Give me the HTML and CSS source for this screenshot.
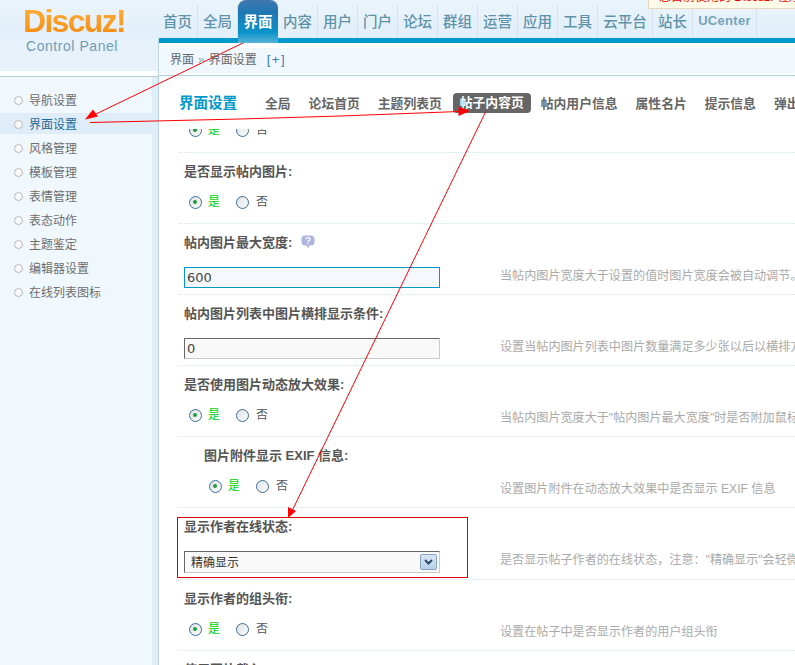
FILE: index.html
```html
<!DOCTYPE html>
<html lang="zh">
<head>
<meta charset="utf-8">
<title>界面设置</title>
<link rel="stylesheet" href="styles.css">
</head>
<body>
<div class="page">
  <header class="top">
    <div class="logo">
      <div class="logo-word">Discuz!</div>
      <div class="logo-sub">Control Panel</div>
    </div>
    <nav class="nav">
      <a>首页</a><a>全局</a><a class="on">界面</a><a>内容</a><a>用户</a><a>门户</a><a>论坛</a><a>群组</a><a>运营</a><a>应用</a><a>工具</a><a class="wide">云平台</a><a>站长</a><a class="uc">UCenter</a>
    </nav>
  </header>
  <div class="columns">
    <aside class="side">
      <div class="side-cap"></div>
      <ul class="menu">
        <li>导航设置</li>
        <li class="on">界面设置</li>
        <li>风格管理</li>
        <li>模板管理</li>
        <li>表情管理</li>
        <li>表态动作</li>
        <li>主题鉴定</li>
        <li>编辑器设置</li>
        <li>在线列表图标</li>
      </ul>
    </aside>
    <main class="main">
      <div class="crumbs"><span>界面</span><span class="sep">»</span><span>界面设置</span><span class="plus">[+]</span></div>
      <div class="tabs">
        <h1>界面设置</h1>
        <a>全局</a><a>论坛首页</a><a>主题列表页</a><a class="on">帖子内容页</a><a>帖内用户信息</a><a>属性名片</a><a>提示信息</a><a>弹出</a>
      </div>
      <div class="form">
        <div class="row first">
          <div class="cell"><div class="radios"><span class="radio sel"></span><b class="yes">是</b><span class="radio"></span><span class="no">否</span></div></div>
        </div>
        <div class="row">
          <div class="cell"><div class="label">是否显示帖内图片:</div><div class="radios"><span class="radio sel"></span><b class="yes">是</b><span class="radio"></span><span class="no">否</span></div></div>
        </div>
        <div class="row">
          <div class="cell"><div class="label">帖内图片最大宽度:<svg class="help" width="14" height="14" viewBox="0 0 14 14"><path d="M4 0.500h6a3.500 3.500 0 0 1 3.500 3.500v3a3.500 3.500 0 0 1-3.500 3.500h-1.500L7 13.500 5.500 10.500H4A3.500 3.500 0 0 1 .5 7V4A3.500 3.500 0 0 1 4 .5z" fill="#aeb4e0"/><path d="M5 4.200c.2-1 1-1.500 2-1.500 1.200 0 2 .7 2 1.600 0 1.300-2 1.300-2 2.700M7 8v1" fill="none" stroke="#fff" stroke-width="1.300"/></svg></div><div class="input focus">600</div></div>
          <div class="tip">当帖内图片宽度大于设置的值时图片宽度会被自动调节。</div>
        </div>
        <div class="row">
          <div class="cell"><div class="label">帖内图片列表中图片横排显示条件:</div><div class="input">0</div></div>
          <div class="tip">设置当帖内图片列表中图片数量满足多少张以后以横排方式显示</div>
        </div>
        <div class="row">
          <div class="cell"><div class="label">是否使用图片动态放大效果:</div><div class="radios"><span class="radio sel"></span><b class="yes">是</b><span class="radio"></span><span class="no">否</span></div></div>
          <div class="tip">当帖内图片宽度大于"帖内图片最大宽度"时是否附加鼠标移动效果</div>
        </div>
        <div class="row">
          <div class="cell sub"><div class="label">图片附件显示 EXIF 信息:</div><div class="radios"><span class="radio sel"></span><b class="yes">是</b><span class="radio"></span><span class="no">否</span></div></div>
          <div class="tip">设置图片附件在动态放大效果中是否显示 EXIF 信息</div>
        </div>
        <div class="row tall">
          <div class="cell"><div class="label">显示作者在线状态:</div>
            <div class="input select"><span>精确显示</span><span class="drop"><svg width="9" height="6" viewBox="0 0 9 6"><path d="M1 1l3.500 3.500L8 1" fill="none" stroke="#2c4a6b" stroke-width="2"/></svg></span></div>
          </div>
          <div class="tip">是否显示帖子作者的在线状态，注意："精确显示"会轻微加重服务器负担</div>
        </div>
        <div class="row">
          <div class="cell"><div class="label">显示作者的组头衔:</div><div class="radios"><span class="radio sel"></span><b class="yes">是</b><span class="radio"></span><span class="no">否</span></div></div>
          <div class="tip">设置在帖子中是否显示作者的用户组头衔</div>
        </div>
        <div class="row">
          <div class="cell"><div class="label">使用图片载入:</div></div>
        </div>
      </div>
    </main>
  </div>

  <div class="notice">您目前使用的 Discuz! 程序有新版本</div>
  <div class="redbox"></div>
  <svg class="marks" width="795" height="665" viewBox="0 0 795 665">
    <g fill="none" stroke="#f00" stroke-width="1">
      <path d="M259.500 35L96 114"/>
      <path d="M90 122.500L240 119L340 116L459 111.500"/>
      <path d="M486 111L292 511"/>
    </g>
    <g fill="#f00">
      <path d="M85 119.500L93 109.500L98 116.500Z"/>
      <path d="M470 111L458.500 106.500L458.500 116Z"/>
      <path d="M288 518L288 507L296 511Z"/>
    </g>
  </svg>
</div>
</body>
</html>
```
FILE: styles.css
```css
* { box-sizing: border-box; }
html, body { margin: 0; padding: 0; }
body { width: 795px; height: 665px; overflow: hidden; background: #fff; font: 12px/14px "Liberation Sans", "Noto Sans CJK SC", sans-serif; color: #666; }
.page { position: relative; width: 795px; height: 665px; overflow: hidden; }

.top { display: flex; height: 38px; background: linear-gradient(#eaf4fb, #e2eff9); }
.logo { width: 159px; padding: 6px 0 0 23px; position: relative; flex: none; }
.logo-word { width: 104px; height: 31px; font: bold 32px/31px "Liberation Sans", sans-serif; letter-spacing: -1.700px; white-space: nowrap; color: #f7941d; background: linear-gradient(#ffb040, #f58a0c); -webkit-background-clip: text; background-clip: text; -webkit-text-fill-color: transparent; }
.logo-sub { font: 14px/16px "Liberation Sans", sans-serif; letter-spacing: .55px; color: #6f9db4; margin: 1px 0 0 3px; position: relative; z-index: 2; }
.nav { display: flex; padding-top: 5px; flex: 1; min-width: 0; height: 38px; margin-left: -1px; }
.nav a { width: 40px; height: 33px; padding-top: 8px; text-align: center; font-family: "Noto Sans CJK SC", sans-serif; font-size: 14.500px; line-height: 16px; font-weight: 500; color: #5f93aa; border-right: 1px solid #d4e4ee; white-space: nowrap; }
.nav a.wide { width: 55px; }
.nav a.uc { width: 64px; font: bold 13px/16px "Liberation Sans", sans-serif; color: #74a4bb; letter-spacing: .3px; padding-top: 8px; }
.nav a.on { height: 43px; margin-top: -5px; padding-top: 13px; font-weight: 700; color: #fff; border: 0; border-radius: 8px 8px 0 0; background: linear-gradient(#4177ac 0, #1d78b5 30%, #0a93c9 75%, #56b3d8 100%); position: relative; z-index: 1; }

.columns { display: flex; height: 627px; }
.side { width: 159px; height: 627px; background: #e6f1fa; border-right: 1px solid #b9d5e4; position: relative; flex: none; }
.side-cap { height: 33px; }
.side-cap::after { content: ""; display: block; height: 5px; background: #fff; border-bottom: 1px solid #b5cfdd; position: relative; top: 33px; width: 158px; }
.menu { list-style: none; margin: 5px 0 0; padding: 13px 0 0; width: 152px; height: 589px; background: #f0f8fd; box-shadow: 6px 0 0 #deedf7; }
.menu li { height: 24px; padding-left: 29px; line-height: 24px; color: #6e6e6e; position: relative; }
.menu li::before { content: ""; position: absolute; left: 14px; top: 7px; width: 7px; height: 7px; border-radius: 50%; background: #f8f8f8; border: 1px solid #bbb; }
.menu li.on { width: 158px; color: #216a9b; background: linear-gradient(#deedf7, #deedf7) no-repeat 0 0 / 100% 21px; }

.main { flex: 1; min-width: 0; height: 627px; overflow: hidden; }
.crumbs { display: flex; height: 37px; margin-left: -1px; padding: 0 0 0 12px; align-items: center; gap: 4px; color: #666; background: #fff; border-top: 5px solid #09c; position: relative; }
.crumbs::before { content: ""; position: absolute; left: 2px; right: 0; top: 5px; height: 25px; background: #f0f8fd; z-index: 0; }
.crumbs::after { content: ""; position: absolute; left: 0; right: 0; top: 32px; height: 1px; background: #b5cfdd; }
.crumbs span { position: relative; z-index: 1; top: 1px; }
.crumbs .sep { color: #8aa; }
.crumbs .plus { color: #3a7fb5; margin-left: 6px; font-size: 13px; letter-spacing: 1.500px; }
.tabs { display: flex; align-items: center; height: 58px; padding: 6px 0 0 20px; white-space: nowrap; background: linear-gradient(#eef5fa, #fff 10px); margin-top: -4px; }
.tabs h1 { margin: 0 28px 0 0; width: 59px; font-size: 14.500px; line-height: 18px; font-weight: 700; color: #09c; }
.tabs a { flex: none; margin-top: 2px; font-size: 12.800px; font-weight: 700; color: #666; margin-right: 18px; }
.tabs a.on { background: #666; color: #fff; border-radius: 4px; height: 20px; line-height: 20px; padding: 0 7px; margin: 0 10px 0 -7px; }

.form { margin-left: 20px; }
.row { display: flex; height: 71px; border-bottom: 1px dotted #d8e6f0; position: relative; }
.row.tall { height: 72px; }
.row.first { height: 24px; overflow: hidden; }
.row.first .radios { margin-top: -19px; }
.cell { width: 321px; padding: 12px 0 0 5px; flex: none; }
.cell.sub { padding-left: 25px; }
.label { height: 14px; font-size: 13px; line-height: 14px; font-weight: 700; color: #555; display: flex; align-items: center; white-space: pre; }
.help { margin-left: 9px; margin-top: -2px; flex: none; }
.radios { display: flex; align-items: center; height: 16px; margin: 15px 0 0 5px; }
.radio { width: 13px; height: 13px; border-radius: 50%; border: 1.500px solid #3f6c95; background: linear-gradient(135deg, #dfe3e6, #fbfbfb); flex: none; position: relative; }
.radio.sel::after { content: ""; position: absolute; left: 3px; top: 3px; width: 4px; height: 4px; border-radius: 50%; background: #1f9c3a; }
.yes { font-weight: 400; color: #00d200; margin: 0 16px 0 6px; width: 12px; }
.no { color: #555; margin-left: 7px; }
.input { width: 256px; height: 21px; margin-top: 17px; padding-left: 2px; font: 13px/19px "DejaVu Sans", sans-serif; color: #444; background: #f9f9f9; border: 1px solid; border-color: #666 #ccc #ccc #666; }
.input.focus { background: #f5f8fd; border-color: #09c; }
.select { display: flex; justify-content: space-between; align-items: center; height: 22px; padding: 0 2px 0 6px; font: 12px/20px "Noto Sans CJK SC", sans-serif; color: #333; }
.drop { width: 17px; height: 16px; border: 1px solid #8aa5c4; border-radius: 2px; background: linear-gradient(#d8e6f5, #b9d0ea); display: flex; align-items: center; justify-content: center; }
.tip { flex: none; width: 400px; padding-top: 45px; color: #aaa; font-size: 12.100px; white-space: nowrap; line-height: 14px; }

.notice { position: absolute; left: 648px; top: -11px; width: 147px; height: 20px; padding-left: 10px; overflow: hidden; white-space: nowrap; background: #fffbe8; border: 1px solid #e8d8c0; border-right: 0; color: #e00; font-size: 12px; line-height: 15px; }
.redbox { position: absolute; left: 177px; top: 517px; width: 291px; height: 61px; border: 1px solid #d80000; }
.marks { position: absolute; left: 0; top: 0; pointer-events: none; }
```
